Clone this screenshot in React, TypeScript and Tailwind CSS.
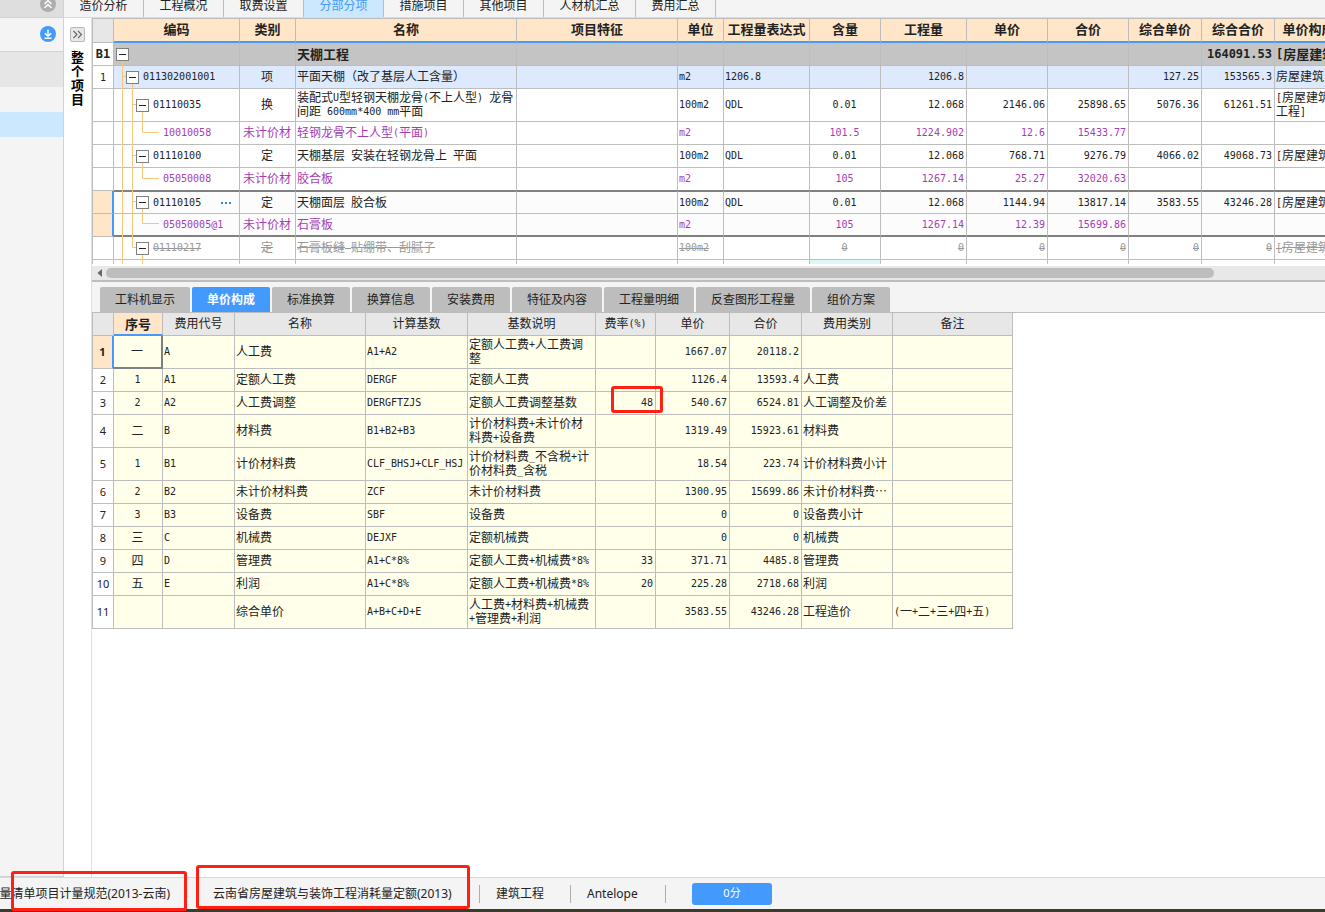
import React from "react";

const MONO = "font-['DejaVu_Sans_Mono','Noto_Sans_CJK_SC',monospace]";
const CJK = "font-['Noto_Sans','Noto_Sans_CJK_SC',sans-serif]";

/* Half-width runs take half the advance of a full-width glyph. */
function Mixed({ text, bold = false, strike = false }: { text: string; bold?: boolean; strike?: boolean }) {
  const parts = text.split(/([\x20-\x7e]+)/);
  return (
    <>
      {parts.map((p, i) =>
        i % 2 === 1 ? (
          <span
            key={i}
            className={`${MONO} align-[1px] leading-none ${bold ? "text-[12px]" : "text-[10px]"} ${strike ? "line-through" : ""}`}
          >
            {p}
          </span>
        ) : strike ? (
          <span key={i} className="line-through">{p}</span>
        ) : (
          p
        )
      )}
    </>
  );
}

const topTabs = [
  { label: "造价分析", w: "w-20" },
  { label: "工程概况", w: "w-20" },
  { label: "取费设置", w: "w-20" },
  { label: "分部分项", w: "w-20", active: true },
  { label: "措施项目", w: "w-20" },
  { label: "其他项目", w: "w-20" },
  { label: "人材机汇总", w: "w-[92px]" },
  { label: "费用汇总", w: "w-20" },
];

const detailTabs = [
  { label: "工料机显示", w: "w-[90px]" },
  { label: "单价构成", w: "w-[78px]", active: true },
  { label: "标准换算", w: "w-[78px]" },
  { label: "换算信息", w: "w-[78px]" },
  { label: "安装费用", w: "w-[78px]" },
  { label: "特征及内容", w: "w-[90px]" },
  { label: "工程量明细", w: "w-[90px]" },
  { label: "反查图形工程量", w: "w-[114px]" },
  { label: "组价方案", w: "w-[78px]" },
];

const mainCols = [
  { label: "", w: "w-[21px]" },
  { label: "编码", w: "w-[126px]" },
  { label: "类别", w: "w-[56px]" },
  { label: "名称", w: "w-[221px]" },
  { label: "项目特征", w: "w-[161px]" },
  { label: "单位", w: "w-[46px]" },
  { label: "工程量表达式", w: "w-[86px]" },
  { label: "含量", w: "w-[71px]" },
  { label: "工程量", w: "w-[86px]" },
  { label: "单价", w: "w-[81px]" },
  { label: "合价", w: "w-[81px]" },
  { label: "综合单价", w: "w-[73px]" },
  { label: "综合合价", w: "w-[73px]" },
  { label: "单价构成文件", w: "w-[94px]" },
];

type Kind = "section" | "item" | "quota" | "material" | "void";
interface MainRow {
  kind: Kind;
  no?: string;
  code?: string;
  tall?: boolean;
  selected?: "first" | "last";
  beforeSelected?: boolean;
  /* type, name, feature, unit, expression, content, quantity, price, total, unit sum, sum, file */
  cells: string[];
}

const mainRows: MainRow[] = [
  { kind: "section", no: "B1", cells: ["", "天棚工程", "", "", "", "", "", "", "", "", "164091.53", "[房屋建筑"] },
  { kind: "item", no: "1", code: "011302001001", cells: ["项", "平面天棚（改了基层人工含量）", "", "m2", "1206.8", "", "1206.8", "", "", "127.25", "153565.3", "房屋建筑"] },
  { kind: "quota", code: "01110035", tall: true, cells: ["换", "装配式U型轻钢天棚龙骨(不上人型) 龙骨\n间距 600mm*400 mm平面", "", "100m2", "QDL", "0.01", "12.068", "2146.06", "25898.65", "5076.36", "61261.51", "[房屋建筑\n工程]"] },
  { kind: "material", code: "10010058", cells: ["未计价材", "轻钢龙骨不上人型(平面)", "", "m2", "", "101.5", "1224.902", "12.6", "15433.77", "", "", ""] },
  { kind: "quota", code: "01110100", cells: ["定", "天棚基层 安装在轻钢龙骨上 平面", "", "100m2", "QDL", "0.01", "12.068", "768.71", "9276.79", "4066.02", "49068.73", "[房屋建筑"] },
  { kind: "material", code: "05050008", beforeSelected: true, cells: ["未计价材", "胶合板", "", "m2", "", "105", "1267.14", "25.27", "32020.63", "", "", ""] },
  { kind: "quota", code: "01110105", selected: "first", cells: ["定", "天棚面层 胶合板", "", "100m2", "QDL", "0.01", "12.068", "1144.94", "13817.14", "3583.55", "43246.28", "[房屋建筑"] },
  { kind: "material", code: "05050005@1", selected: "last", cells: ["未计价材", "石膏板", "", "m2", "", "105", "1267.14", "12.39", "15699.86", "", "", ""] },
  { kind: "void", code: "01110217", cells: ["定", "石膏板缝 贴绷带、刮腻子", "", "100m2", "", "0", "0", "0", "0", "0", "0", "[房屋建筑"] },
];

const mainAlign = [
  "text-center", "text-left", "text-left", "text-left", "text-left", "text-center",
  "text-right", "text-right", "text-right", "text-right", "text-right", "text-left",
];

const rowTone: Record<Kind, string> = {
  section: "bg-[#c4c4c4] text-[#222] font-bold text-[13px]",
  item: "bg-[#dde9fd] text-[#222] text-[12px]",
  quota: "text-[#222] text-[12px]",
  material: "text-[#a63cb4] text-[12px]",
  void: "text-[#999] text-[12px]",
};

function Guides({ row }: { row: MainRow }) {
  const { kind, tall, selected } = row;
  const h = tall ? 32 : selected ? 21 : 22;
  const mid = Math.floor(h / 2) - 0.5;
  const end = h + (selected ? 2 : 1);
  const paths: Record<Kind, string> = {
    section: `M8.5 ${mid + 7}V${end}`,
    item: `M8.5 0V${end}M8.5 ${mid}H12M18.5 ${mid + 7}V${end}`,
    quota: `M8.5 -1V${end}M18.5 -1V${end}M18.5 ${mid}H22M28.5 ${mid + 7}V${end}`,
    material: `M8.5 0V${end}M18.5 0V${end}M28.5 0V${mid}H45`,
    void: `M8.5 0V${end}M18.5 0V${mid}H22M28.5 ${mid + 7}V${end}`,
  };
  const w = { section: 2, item: 12, quota: 22, material: 49, void: 22 }[kind];
  return (
    <svg width={w} height={h} className="shrink-0 overflow-visible" fill="none" stroke="#f9c779">
      <path d={paths[kind]} />
    </svg>
  );
}

function CodeCell({ row }: { row: MainRow }) {
  return (
    <div className="flex items-center">
      <Guides row={row} />
      {row.kind !== "material" && (
        <button aria-label="折叠" className="mr-1 flex size-[13px] shrink-0 items-center justify-center border border-[#808080] bg-white">
          <span className="h-px w-[7px] bg-[#222]" />
        </button>
      )}
      {row.code && (
        <span className="leading-[14px]">
          <Mixed text={row.code} strike={row.kind === "void"} />
        </span>
      )}
      {row.selected === "first" && (
        <button aria-label="更多" className="ml-auto mr-2 flex gap-0.5">
          <span className="size-0.5 bg-[#2f86dc]" />
          <span className="size-0.5 bg-[#2f86dc]" />
          <span className="size-0.5 bg-[#2f86dc]" />
        </button>
      )}
    </div>
  );
}

function MainTable() {
  return (
    <table className="w-[1276px] table-fixed border-separate border-spacing-0 whitespace-pre border-t border-[#bdbdbd] leading-[14px]">
      <colgroup>
        {mainCols.map((c, i) => <col key={i} className={c.w} />)}
      </colgroup>
      <thead>
        <tr>
          {mainCols.map((c, i) => (
            <th
              key={i}
              className={`h-6 border-r border-r-[#bdbdbd] px-0 pb-0.5 pt-0 text-[13px] font-bold text-[#222] ${
                i === 0 ? "border-b border-b-[#bdbdbd] bg-[#e7e7e7]" : "border-b-2 border-b-[#4499fc] bg-[#ffe6c8]"
              }`}
            >
              {c.label}
            </th>
          ))}
        </tr>
      </thead>
      <tbody>
        {mainRows.map((r, ri) => {
          const edge = r.beforeSelected
            ? "border-b border-b-[#808080]"
            : r.selected === "first"
            ? "border-t border-t-[#808080] border-b border-b-[#bdbdbd]"
            : r.selected === "last"
            ? "border-b-2 border-b-[#808080]"
            : "border-b border-b-[#bdbdbd]";
          const h = r.tall ? "h-[33px]" : "h-[23px]";
          return (
            <tr key={ri}>
              <th
                className={`${h} border-b border-b-[#bdbdbd] p-0 text-center text-[#222] ${
                  r.selected ? "border-r-2 border-r-[#4499fc] bg-[#ffe6c8]" : "border-r border-r-[#bdbdbd] bg-white"
                } ${r.kind === "section" ? "text-[12px] font-bold" : "text-[10px] font-normal"}`}
              >
                <span className={MONO}>{r.no}</span>
              </th>
              <td className={`border-r border-r-[#bdbdbd] p-0 ${edge} ${rowTone[r.kind]} ${r.selected ? "bg-[#fcfcfc]" : ""}`}>
                <CodeCell row={r} />
              </td>
              {r.cells.map((c, ci) => (
                <td
                  key={ci}
                  className={`overflow-hidden border-r border-r-[#bdbdbd] py-0 pl-px pr-0.5 ${mainAlign[ci]} ${edge} ${rowTone[r.kind]} ${
                    r.selected ? "bg-[#fcfcfc]" : ""
                  }`}
                >
                  <Mixed text={c} bold={r.kind === "section"} strike={r.kind === "void"} />
                </td>
              ))}
            </tr>
          );
        })}
        <tr>
          {mainCols.map((_, i) => (
            <td key={i} className={`h-1 border-r border-[#bdbdbd] p-0 ${i === 7 ? "bg-[#d9f8f7]" : ""}`}>
              {i === 1 && (
                <svg width="40" height="4" className="block" stroke="#f9c779">
                  <path d="M8.5 0V4M28.5 0V4" />
                </svg>
              )}
            </td>
          ))}
        </tr>
      </tbody>
    </table>
  );
}

const feeCols = [
  { label: "", w: "w-[21px]", align: "" },
  { label: "序号", w: "w-[49px]", align: "text-center" },
  { label: "费用代号", w: "w-[72px]", align: "text-left" },
  { label: "名称", w: "w-[131px]", align: "text-left" },
  { label: "计算基数", w: "w-[102px]", align: "text-left" },
  { label: "基数说明", w: "w-[128px]", align: "text-left" },
  { label: "费率(%)", w: "w-[60px]", align: "text-right" },
  { label: "单价", w: "w-[74px]", align: "text-right" },
  { label: "合价", w: "w-[72px]", align: "text-right" },
  { label: "费用类别", w: "w-[91px]", align: "text-left" },
  { label: "备注", w: "w-[120px]", align: "text-left" },
];

const feeRows: string[][] = [
  ["一", "A", "人工费", "A1+A2", "定额人工费+人工费调\n整", "", "1667.07", "20118.2", "", ""],
  ["1", "A1", "定额人工费", "DERGF", "定额人工费", "", "1126.4", "13593.4", "人工费", ""],
  ["2", "A2", "人工费调整", "DERGFTZJS", "定额人工费调整基数", "48", "540.67", "6524.81", "人工调整及价差", ""],
  ["二", "B", "材料费", "B1+B2+B3", "计价材料费+未计价材\n料费+设备费", "", "1319.49", "15923.61", "材料费", ""],
  ["1", "B1", "计价材料费", "CLF_BHSJ+CLF_HSJ", "计价材料费_不含税+计\n价材料费_含税", "", "18.54", "223.74", "计价材料费小计", ""],
  ["2", "B2", "未计价材料费", "ZCF", "未计价材料费", "", "1300.95", "15699.86", "未计价材料费⋯", ""],
  ["3", "B3", "设备费", "SBF", "设备费", "", "0", "0", "设备费小计", ""],
  ["三", "C", "机械费", "DEJXF", "定额机械费", "", "0", "0", "机械费", ""],
  ["四", "D", "管理费", "A1+C*8%", "定额人工费+机械费*8%", "33", "371.71", "4485.8", "管理费", ""],
  ["五", "E", "利润", "A1+C*8%", "定额人工费+机械费*8%", "20", "225.28", "2718.68", "利润", ""],
  ["", "", "综合单价", "A+B+C+D+E", "人工费+材料费+机械费\n+管理费+利润", "", "3583.55", "43246.28", "工程造价", "(一+二+三+四+五)"],
];

function FeeTable() {
  return (
    <table className="w-[920px] table-fixed border-separate border-spacing-0 whitespace-pre text-[12px] leading-[14px] text-[#222]">
      <colgroup>
        {feeCols.map((c, i) => <col key={i} className={c.w} />)}
      </colgroup>
      <thead>
        <tr>
          {feeCols.map((c, i) => (
            <th
              key={i}
              className={`h-[23px] border-r border-r-[#bdbdbd] p-0 ${
                i === 1
                  ? "border-b-2 border-b-[#4499fc] bg-[#ffe6c8] text-[13px] font-bold"
                  : "border-b border-b-[#bdbdbd] bg-[#e7e7e7] font-normal"
              }`}
            >
              <Mixed text={c.label} />
            </th>
          ))}
        </tr>
      </thead>
      <tbody>
        {feeRows.map((r, ri) => {
          const tall = r[4].includes("\n");
          return (
            <tr key={ri}>
              <th
                className={`p-0 text-center text-[11px] ${tall ? "h-[33px]" : "h-[23px]"} border-b border-b-[#bdbdbd] ${
                  ri === 0
                    ? "border-r-2 border-r-[#4499fc] bg-[#ffe6c8] font-bold"
                    : "border-r border-r-[#bdbdbd] bg-white font-normal"
                }`}
              >
                {ri + 1}
              </th>
              {r.map((c, ci) => (
                <td
                  key={ci}
                  className={`bg-[#ffffea] py-0 pl-px pr-0.5 ${feeCols[ci + 1].align} ${
                    ri === 0 && ci === 0
                      ? "border-b-2 border-r-2 border-[#808080]"
                      : "border-b border-r border-[#bdbdbd]"
                  } ${ri === 2 && ci === 5 ? "relative" : ""}`}
                >
                  <Mixed text={c} />
                  {ri === 2 && ci === 5 && (
                    <span className="absolute -right-2 -top-1.5 h-[27px] w-[52px] rounded-[3px] border-3 border-[#ff2013]" />
                  )}
                </td>
              ))}
            </tr>
          );
        })}
      </tbody>
    </table>
  );
}

function Sidebar() {
  return (
    <aside className="flex w-16 shrink-0 flex-col border-b border-r border-[#d2d2d2] bg-[#f4f4f4]">
      <div className="flex h-[18px] shrink-0 justify-end overflow-hidden border-b border-[#d2d2d2] bg-[#dedede] pr-[7px]">
        <button aria-label="收起" className="-mt-1 size-4">
          <svg viewBox="0 0 16 16" className="size-4">
            <circle cx="8" cy="8" r="8" fill="#adadad" />
            <path d="M4.5 8L8 4.5L11.5 8M4.5 12L8 8.500L11.500 12" fill="none" stroke="#fff" strokeWidth="1.4" />
          </svg>
        </button>
      </div>
      <div className="flex h-[34px] shrink-0 items-center justify-end border-b border-[#d2d2d2] pb-0.5 pr-[7px]">
        <button aria-label="下载">
          <svg viewBox="0 0 16 16" className="block size-4">
            <circle cx="8" cy="8" r="8" fill="#4499fc" />
            <path d="M8 3.500V10M4.800 7.200L8 10.300L11.200 7.200M4.500 12.300H11.500" fill="none" stroke="#fff" strokeWidth="1.4" />
          </svg>
        </button>
      </div>
      <div className="h-[35px] bg-[#e6e6e6]" />
      <div className="h-[25px]" />
      <div className="h-[25px] bg-[#cce8ff]" />
    </aside>
  );
}

export default function App() {
  return (
    <div className={`flex min-h-screen flex-col overflow-hidden bg-white text-[12px] text-[#222] ${CJK}`}>
      <div className="flex grow">
        <Sidebar />
        <div className="flex min-w-0 flex-1 flex-col">
          <nav className="flex h-[18px] overflow-hidden border-b border-[#dcdcdc] bg-[#f4f4f4]">
            {topTabs.map((t) => (
              <button
                key={t.label}
                className={`h-[17px] shrink-0 border-r border-[#bdbdbd] pb-[5px] text-[12px] leading-[12px] ${t.w} ${
                  t.active ? "bg-[#cce8ff] text-[#4499fc]" : ""
                }`}
              >
                {t.label}
              </button>
            ))}
          </nav>
          <div className="flex grow">
            <div className="flex w-7 shrink-0 flex-col items-center border-r border-[#e0e0e0] pt-[9px]">
              <button aria-label="展开" className="flex size-[15px] items-center justify-center rounded-xs border border-[#b8b8b8] bg-[#e7e7e7]">
                <svg viewBox="0 0 11 11" className="size-[11px]" fill="none" stroke="#666" strokeWidth="1.1">
                  <path d="M1.500 2L5 5.500L1.500 9M6 2L9.500 5.500L6 9" />
                </svg>
              </button>
              <span className="mt-2 w-[13px] break-all text-[13px] font-bold leading-[14px] text-black">整个项目</span>
            </div>
            <main className="flex min-w-0 flex-1 flex-col">
              <section className="overflow-hidden border-l border-[#bdbdbd]">
                <MainTable />
              </section>
              <div className="mt-0.5 flex h-3.5 items-center bg-[#e8e8e8] pl-[5px]">
                <button aria-label="向左滚动" className="mr-1">
                  <svg viewBox="0 0 5 8" className="h-2 w-[5px]" fill="#666">
                    <path d="M5 0V8L0.500 4Z" />
                  </svg>
                </button>
                <div className="flex-1">
                  <div className="h-2.5 w-10/11 rounded-full bg-[#bdbdbd]" />
                </div>
              </div>
              <div className="flex gap-0.5 border-b border-t-2 border-[#bdbdbd] bg-[#f4f4f4] pl-2 pt-[5px]">
                {detailTabs.map((t) => (
                  <button
                    key={t.label}
                    className={`h-[25px] shrink-0 rounded-t-xs text-[12px] ${t.w} ${
                      t.active ? "bg-[#4499fc] font-bold text-white" : "bg-[#bdbdbd]"
                    }`}
                  >
                    {t.label}
                  </button>
                ))}
              </div>
              <section className="self-start border-l border-[#bdbdbd]">
                <FeeTable />
              </section>
            </main>
          </div>
        </div>
      </div>
      <footer className="flex h-8 items-center whitespace-nowrap border-t border-[#d8d8d8] bg-[#f4f4f4]">
        <div className="relative flex w-[187px] justify-end pr-[17px]">
          量清单项目计量规范(2013-云南)
          <span className="absolute -top-3.5 right-0 h-10 w-44 rounded-[3px] border-3 border-[#ff2013]" />
        </div>
        <div className="relative ml-[9px] w-[274px] pl-[17px]">
          云南省房屋建筑与装饰工程消耗量定额(2013)
          <span className="absolute -top-5 left-0 h-11 w-full rounded-[3px] border-3 border-[#ff2013]" />
        </div>
        <span className="ml-[9px] h-[18px] w-px bg-[#a9adb5]" />
        <span className="w-[90px] pl-4">建筑工程</span>
        <span className="h-[18px] w-px bg-[#a9adb5]" />
        <span className="w-[94px] pl-4 text-[12px]">Antelope</span>
        <span className="h-[18px] w-px bg-[#a9adb5]" />
        <button className="ml-[26px] h-[22px] w-20 rounded-[3px] bg-[#4499fc] text-[11px] text-white">0分</button>
      </footer>
      <div className="h-[3px] bg-[#3b3c2c]" />
    </div>
  );
}
